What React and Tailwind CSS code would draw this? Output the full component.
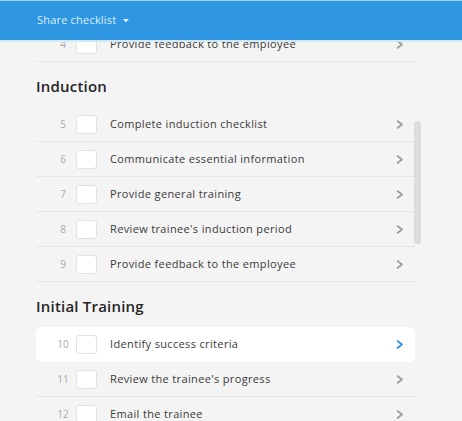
const sections = [
  { title: null, items: [{ n: 4, label: 'Provide feedback to the employee' }] },
  {
    title: 'Induction',
    items: [
      { n: 5, label: 'Complete induction checklist' },
      { n: 6, label: 'Communicate essential information' },
      { n: 7, label: 'Provide general training' },
      { n: 8, label: "Review trainee's induction period" },
      { n: 9, label: 'Provide feedback to the employee' },
    ],
  },
  {
    title: 'Initial Training',
    items: [
      { n: 10, label: 'Identify success criteria', active: true },
      { n: 11, label: "Review the trainee's progress" },
      { n: 12, label: 'Email the trainee' },
    ],
  },
]

function Chevron({ active }) {
  return (
    <svg width="8" height="9" viewBox="0 0 8 9" fill="none">
      <polyline
        points="1.5,1 6,4.5 1.5,8"
        stroke={active ? '#2f8fd6' : '#9a9a9a'}
        strokeWidth="1.6"
        strokeLinecap="round"
        strokeLinejoin="round"
      />
    </svg>
  )
}

function Row({ item, last }) {
  return (
    <div
      className={`flex items-center h-[35px] ${
        item.active ? 'bg-white rounded-md' : last ? '' : 'border-b border-[#e6e6e6]'
      }`}
    >
      <span className="w-[40px] pl-[14px] text-center text-[10px] text-[#aaaaaa]">{item.n}</span>
      <span className="w-[21px] h-[19px] bg-white border border-[#e2e2e2] rounded-[3px] shrink-0" />
      <span className="ml-[13px] flex-1 text-[11px] text-[#3a3a3a] tracking-[0.35px]">{item.label}</span>
      <span className="w-[30px] flex justify-center">
        <Chevron active={item.active} />
      </span>
    </div>
  )
}

export default function App() {
  return (
    <div className="relative w-[462px] h-[421px] overflow-hidden bg-[#f4f4f4] font-['Open_Sans',sans-serif]">
      <div className="relative z-10 h-[42px] border-t border-[#9fd0f3] bg-[#2f96e1] border-b-2 border-b-[#d3e9f8] flex items-center pl-[37px]">
        <span className="text-[11px] text-[#dcefff] tracking-[0.2px]">Share checklist</span>
        <svg className="ml-[7px] mt-[1px]" width="6" height="4" viewBox="0 0 6 4">
          <polygon points="0,0 6,0 3,3.5" fill="#dcefff" />
        </svg>
      </div>

      <div className="-mt-[15px] pl-[36px] w-[415px]">
        {sections.map((s, i) => (
          <div key={i}>
            {s.title && (
              <h2 className="h-[45px] pt-[14px] text-[15px] font-semibold text-[#252525] leading-[20px] tracking-[0.2px]">
                {s.title}
              </h2>
            )}
            {s.items.map((item, j) => (
              <Row key={item.n} item={item} last={s.items[j + 1]?.active} />
            ))}
          </div>
        ))}
      </div>

      <div className="absolute left-[414px] top-[121px] w-[7px] h-[123px] rounded-full bg-[#dcdcdc]" />
    </div>
  )
}
